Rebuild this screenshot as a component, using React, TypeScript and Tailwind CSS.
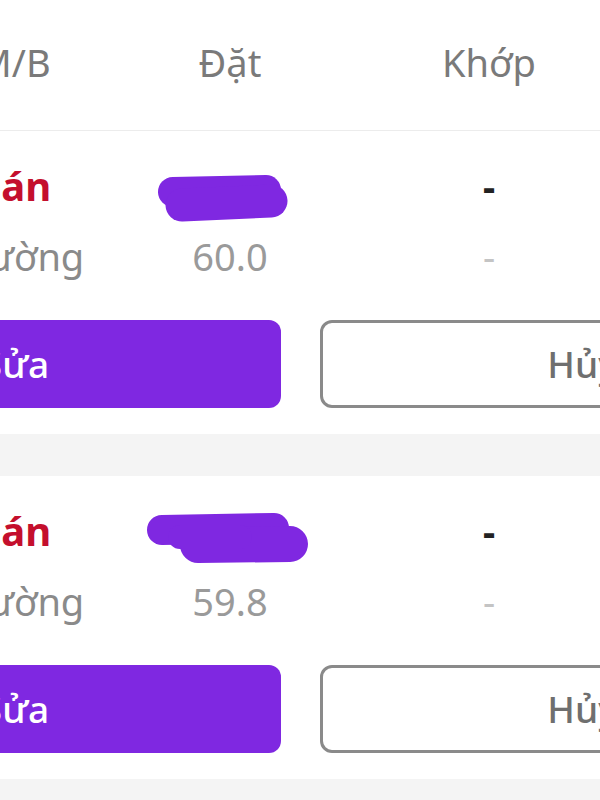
import React from "react";

const font = { fontFamily: '"Noto Sans", "Open Sans", sans-serif' };

function Blob1() {
  return (
    <svg className="absolute left-[60px] top-[12px]" width="140" height="60" viewBox="0 0 140 60">
      <path d="M19 19 L112 17" stroke="#7f28e1" strokeWidth="30" strokeLinecap="round" fill="none" />
      <path d="M28 32 L117 28" stroke="#7f28e1" strokeWidth="33" strokeLinecap="round" fill="none" />
    </svg>
  );
}

function Blob2() {
  return (
    <svg className="absolute left-[46px] top-[1px]" width="175" height="64" viewBox="0 0 175 64">
      <path d="M22 23 L134 21" stroke="#7f28e1" strokeWidth="30" strokeLinecap="round" fill="none" />
      <path d="M58 38 L150 37" stroke="#7f28e1" strokeWidth="36" strokeLinecap="round" fill="none" />
      <path d="M40 30 L100 30" stroke="#7f28e1" strokeWidth="24" strokeLinecap="round" fill="none" />
    </svg>
  );
}

function Card({ price, blob }: { price: string; blob: React.ReactNode }) {
  return (
    <div className="bg-white pt-[30px] pb-[26px]">
      <div className="ml-[-66px] grid grid-cols-[160px_272px_246px] h-[50px] items-center text-[38px] leading-[50px]">
        <div className="text-center font-bold text-[40px] text-[#c40f2d] pr-[2px]">Bán</div>
        <div className="relative h-[50px]">{blob}</div>
        <div className="text-center font-bold text-[#222]">-</div>
      </div>
      <div className="mt-[20px] ml-[-66px] grid grid-cols-[160px_272px_246px] h-[50px] items-center text-[38px] leading-[50px]">
        <div className="text-center text-[#8a8a8a]">Thường</div>
        <div className="text-center text-[#9a9a9a]">{price}</div>
        <div className="text-center text-[#c4c4c4]">-</div>
      </div>
      <div className="mt-[39px] ml-[-250px] flex gap-[39px]">
        <div className="w-[531px] h-[88px] shrink-0 rounded-[12px] bg-[#7f28e1] text-white flex items-center justify-center text-[37px] font-medium">
          Sửa
        </div>
        <div className="w-[531px] h-[88px] shrink-0 rounded-[12px] border-[3px] border-[#8a8a8a] bg-white text-[#6f6f6f] flex items-center justify-center text-[37px] font-medium pr-[6px]">
          Hủy
        </div>
      </div>
    </div>
  );
}

export default function App() {
  return (
    <div className="w-[600px] h-[800px] overflow-hidden bg-[#f4f4f4]" style={font}>
      <div className="bg-white h-[131px] border-b border-[#ececec]">
        <div className="ml-[-66px] grid grid-cols-[160px_272px_246px] h-[130px] items-center text-[38px] text-[#7a7a7a] pb-[6px]">
          <div className="text-center">M/B</div>
          <div className="text-center">Đặt</div>
          <div className="text-center">Khớp</div>
        </div>
      </div>
      <Card price="60.0" blob={<Blob1 />} />
      <div className="h-[42px] bg-[#f4f4f4]" />
      <Card price="59.8" blob={<Blob2 />} />
    </div>
  );
}
